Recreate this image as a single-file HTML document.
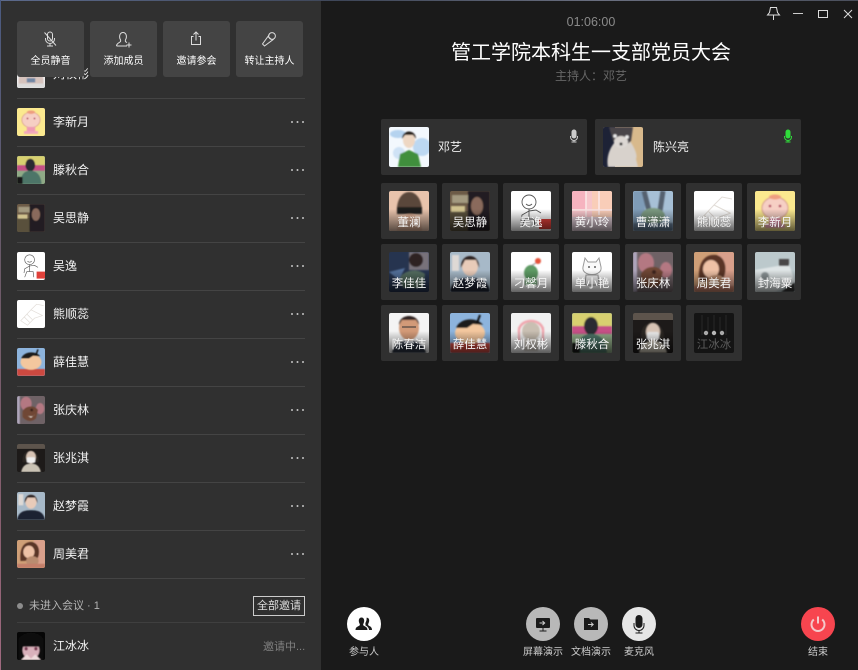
<!DOCTYPE html>
<html lang="zh"><head><meta charset="utf-8"><title>会议</title>
<style>
*{box-sizing:border-box;margin:0;padding:0}
html,body{width:858px;height:670px;overflow:hidden;background:#1a1a1a}
body{position:relative;font-family:"Liberation Sans","Noto Sans CJK SC",sans-serif;font-size:12px;color:#fff}
.abs,.hd,.av,.nm,.dots,.sep,.c,.cav,.tb,.lab,.circ{position:absolute}
#left{position:absolute;left:1px;top:1px;width:320px;height:669px;background:#303030}
.hd{top:21px;width:67px;height:56px;background:#444;border-radius:3px;text-align:center;font-size:10px;line-height:16px;color:#fff}
.hd svg{position:absolute;left:23px;top:8px}
.hd span{position:absolute;left:0;right:0;top:33px}
.av{left:17px;width:28px;height:28px;border-radius:2px;overflow:hidden}
.av svg,.cav svg{display:block;width:100%;height:100%}
.nm{left:53px;line-height:18px;color:#f2f2f2;white-space:nowrap}
.dots{left:291px;width:13px;height:2px;background:radial-gradient(circle at 1px 1px,#bbb .9px,transparent 1.1px) 0 0/5.5px 2px repeat-x}
.sep{left:17px;width:288px;height:1px;background:#444}
.c{width:56px;height:56px;background:#303030;border-radius:2px}
.c.l{width:206px}
.cav{left:8px;top:8px;width:40px;height:40px;border-radius:2px;overflow:hidden}
.tb{left:8px;top:8px;width:40px;height:40px;border-radius:2px;background:linear-gradient(to bottom,rgba(0,0,0,0) 45%,rgba(0,0,0,.62) 100%);color:#f5f5f5;text-align:center;font-size:11.5px;line-height:18px;padding-top:23px;white-space:nowrap;overflow:hidden}
.circ{top:607px;width:34px;height:34px;border-radius:50%}
.circ svg{position:absolute;left:0;top:0}
.lab{top:645px;width:60px;text-align:center;font-size:10px;line-height:15px;color:#ccc;white-space:nowrap}
</style></head><body>
<svg width="0" height="0" style="position:absolute">
<defs>
<filter id="b"><feGaussianBlur stdDeviation=".9"/></filter>
<symbol id="dy" viewBox="0 0 40 40"><rect width="40" height="40" fill="#f3f8fd"/><g filter="url(#b)"><ellipse cx="9" cy="7" rx="8" ry="4" fill="#b5d3ef"/><ellipse cx="33" cy="20" rx="9" ry="9" fill="#bcd8f2"/><ellipse cx="10" cy="26" rx="6" ry="6" fill="#cfe2f5"/><path d="M9 40l2-13 9-4 9 4 3 13z" fill="#3f8f3d"/><ellipse cx="20" cy="13" rx="6" ry="8" fill="#eed7c3"/><path d="M13 12c0-10 14-10 14 0l-3-4h-8z" fill="#201a18"/></g></symbol>
<symbol id="xl" viewBox="0 0 40 40"><rect width="40" height="40" fill="#d8b98c"/><rect width="12" height="40" fill="#1d2236"/><g filter="url(#b)"><path d="M5 40c-2-10 2-20 8-26l14 0c4 6 8 14 6 18l2 8z" fill="#d8d2cc"/><path d="M6 0h24l-2 14c-4 5-14 5-18 0z" fill="#4a4448"/><ellipse cx="18" cy="15" rx="7" ry="6" fill="#dcd7d3"/><circle cx="12" cy="9" r="1.800" fill="#eee"/><circle cx="24" cy="10" r="1.800" fill="#eee"/><circle cx="18" cy="17" r="1.500" fill="#222"/></g></symbol>
<symbol id="dl" viewBox="0 0 40 40"><rect width="40" height="40" fill="#e8c3ac"/><g filter="url(#b)"><path d="M8 22c-2-28 26-28 25 0z" fill="#5a463b"/><rect x="8" y="16" width="25" height="7" fill="#1d1b1c"/><path d="M8 40c0-12 8-17 13-17s12 5 12 17z" fill="#dcaf95"/></g></symbol>
<symbol id="ws" viewBox="0 0 40 40"><rect width="40" height="40" fill="#6c5b47"/><rect x="0" y="20" width="20" height="20" fill="#59503c"/><g filter="url(#b)"><rect x="2" y="4" width="17" height="8" fill="#a39a80"/><rect x="1" y="15" width="14" height="6" fill="#d0c28f"/><path d="M18 40V0h22v40z" fill="#211d21"/><ellipse cx="27" cy="15" rx="6" ry="9" fill="#8a6a5b"/></g></symbol>
<symbol id="wy" viewBox="0 0 40 40"><rect width="40" height="40" fill="#fff"/><g fill="none" stroke="#555" stroke-width=".9"><circle cx="18" cy="11" r="7"/><path d="M15 13c2 2 4 2 6 0M18 18v10M18 20l-7 4-1 6M18 20l7-1 5 3M14 28h9l1 8M14 28l-3 8"/></g><rect x="28" y="28" width="12" height="10" fill="#e0413a"/></symbol>
<symbol id="hx" viewBox="0 0 40 40"><rect width="40" height="40" fill="#f7c6cb"/><rect x="20" width="20" height="40" fill="#f9cdb8"/><rect x="0" width="14" height="18" fill="#f6b3bf"/><path d="M0 19h40M14 0v40M27 0v24" stroke="#fbe6e6" stroke-width="1.6"/><rect y="26" width="40" height="14" fill="#e2cfd8"/></symbol>
<symbol id="cx" viewBox="0 0 40 40"><rect width="40" height="40" fill="#a7c0d6"/><g filter="url(#b)"><rect x="0" width="12" height="40" fill="#7f9cb7"/><path d="M11 0l5 20M30 0l-3 20" stroke="#55606e" stroke-width="5"/><ellipse cx="20" cy="25" rx="12" ry="8" fill="#7c9a81"/><path d="M0 40h40v-8H0z" fill="#62788f"/></g></symbol>
<symbol id="xr" viewBox="0 0 40 40"><rect width="40" height="40" fill="#fff"/><g fill="none" stroke="#e2ddd8" stroke-width="1"><path d="M5 30L20 14l8-8 10 2M20 14l16 8M6 30l9 6 10-10 12-4M10 24l8 8M14 20l8 8"/></g></symbol>
<symbol id="lx" viewBox="0 0 40 40"><rect width="40" height="40" fill="#fbe98f"/><g filter="url(#b)"><ellipse cx="20" cy="17" rx="13" ry="11" fill="#f6cfc4" stroke="#d59a8d"/><rect x="14" y="27" width="12" height="9" fill="#ef9ab4"/><rect x="10" y="33" width="20" height="4" fill="#f2a7bc"/><circle cx="15" cy="15" r="1.3" fill="#a35"/><circle cx="25" cy="15" r="1.3" fill="#a35"/><ellipse cx="20" cy="6" rx="6" ry="2.5" fill="#ee9d7f"/></g></symbol>
<symbol id="lj" viewBox="0 0 40 40"><rect width="40" height="40" fill="#26344f"/><g filter="url(#b)"><rect x="20" width="20" height="18" fill="#78727a"/><ellipse cx="27" cy="8" rx="7" ry="7" fill="#2d2122"/><path d="M10 26c6-8 18-10 26-4l-2 14H14z" fill="#536c5f"/><path d="M0 20l16-4-6 12z" fill="#53709a"/></g></symbol>
<symbol id="zm" viewBox="0 0 40 40"><rect width="40" height="40" fill="#a7b9c8"/><g filter="url(#b)"><path d="M0 40c2-12 10-14 20-14s18 2 20 14z" fill="#1d2231"/><ellipse cx="20" cy="14" rx="8" ry="10" fill="#e8cbb9"/><path d="M11 16C10 0 30 0 29 16l-3-8H15z" fill="#2b2023"/><rect x="2" y="3" width="7" height="16" fill="#ded9d5"/></g></symbol>
<symbol id="dm" viewBox="0 0 40 40"><rect width="40" height="40" fill="#fff"/><g filter="url(#b)"><ellipse cx="20" cy="21" rx="7" ry="8" fill="#5d9a64"/><path d="M20 14l8-5" stroke="#888"/><circle cx="27" cy="9" r="3" fill="#e5533b"/><rect x="14" y="28" width="12" height="5" fill="#5d9a64"/></g></symbol>
<symbol id="dx" viewBox="0 0 40 40"><rect width="40" height="40" fill="#fff"/><g fill="#fafafa" stroke="#9a9a9a"><path d="M13 6l3 4h8l3-4 2 9c2 10-20 10-18 0z"/><path d="M14 23h12l1 10H13zM27 30l6-4"/></g><circle cx="17" cy="15" r=".9" fill="#333"/><circle cx="23" cy="15" r=".9" fill="#333"/></symbol>
<symbol id="zq" viewBox="0 0 40 40"><rect width="40" height="40" fill="#6f6266"/><g filter="url(#b)"><rect width="4" height="40" fill="#aea6bb"/><ellipse cx="13" cy="11" rx="8" ry="10" fill="#b47882"/><ellipse cx="33" cy="18" rx="6" ry="8" fill="#b47882"/><path d="M8 22c4-8 16-10 22-2l-3 12c-6 6-14 4-19-2z" fill="#6f4634"/><path d="M13 27c4 3 10 3 13-1l-6 5z" fill="#e7dcd0"/><circle cx="21" cy="20" r="2" fill="#3a241e"/></g></symbol>
<symbol id="zj" viewBox="0 0 40 40"><rect width="40" height="40" fill="#cf9f77"/><g filter="url(#b)"><rect x="24" width="16" height="40" fill="#d9a08c"/><path d="M5 30C3 6 14 2 22 3s12 12 8 22l-3 4z" fill="#5a3528"/><ellipse cx="17" cy="17" rx="8" ry="9" fill="#eec1a6"/><ellipse cx="22" cy="30" rx="9" ry="7" fill="#b98c6f"/><path d="M0 40h40v-6H0z" fill="#c37f6b"/></g></symbol>
<symbol id="fh" viewBox="0 0 40 40"><rect width="40" height="40" fill="#bcc9cc"/><g filter="url(#b)"><path d="M0 18l34-6 6 18-20 10H0z" fill="#dfe5e6"/><path d="M24 7h10v7H24z" fill="#4a4646"/><circle cx="10" cy="24" r="4" fill="#8b9496"/><path d="M26 40l14-10v10z" fill="#333"/></g></symbol>
<symbol id="cc" viewBox="0 0 40 40"><rect width="40" height="40" fill="#f4f4f4"/><g filter="url(#b)"><ellipse cx="20" cy="15" rx="10" ry="12" fill="#d29a78"/><path d="M10 12C10 0 30 0 30 12l-3-5H13z" fill="#2e2320"/><path d="M3 40c2-10 10-12 17-12s15 2 17 12z" fill="#2c3340"/></g><path d="M13 14h14" stroke="#333"/></symbol>
<symbol id="xj" viewBox="0 0 40 40"><rect width="40" height="40" fill="#8db4dd"/><g filter="url(#b)"><rect y="30" width="40" height="10" fill="#cc4a40"/><ellipse cx="20" cy="20" rx="15" ry="11" fill="#f3c79e"/><path d="M6 15C10 4 28 4 33 12l-10-1-6 4z" fill="#1b1b1b"/><path d="M30 2l-3 8" stroke="#111" stroke-width="2"/></g></symbol>
<symbol id="lq" viewBox="0 0 40 40"><rect width="40" height="40" fill="#f1f1f1"/><g filter="url(#b)"><path d="M8 20C6 4 34 4 32 20" fill="none" stroke="#f0a6ae" stroke-width="2.5"/><path d="M8 14v14M32 14v14" stroke="#f0a6ae" stroke-width="2"/><ellipse cx="20" cy="18" rx="9" ry="9" fill="#c9bfb2"/><rect x="13" y="26" width="14" height="12" fill="#c9c4bc"/></g></symbol>
<symbol id="tq" viewBox="0 0 40 40"><rect width="40" height="40" fill="#8faa86"/><g filter="url(#b)"><rect width="40" height="13" fill="#d8d06f"/><rect y="13" width="40" height="8" fill="#c64f86"/><ellipse cx="19" cy="13" rx="7" ry="9" fill="#2a2a30"/><path d="M5 40c0-14 6-19 14-19s15 5 16 19z" fill="#4e7468"/><rect y="30" width="8" height="10" fill="#141518"/></g></symbol>
<symbol id="zz" viewBox="0 0 40 40"><rect width="40" height="40" fill="#1d1a19"/><rect width="40" height="7" fill="#5d544c"/><g filter="url(#b)"><path d="M8 26C6 4 32 4 31 26z" fill="#2b2523"/><ellipse cx="20" cy="19" rx="7" ry="9" fill="#d7c3b4"/><rect x="14" y="19" width="12" height="8" rx="2" fill="#eee"/><path d="M6 40c2-10 8-12 14-12s12 2 14 12z" fill="#c9c2b4"/></g></symbol>
<symbol id="jb" viewBox="0 0 40 40"><rect width="40" height="40" fill="#060606"/><g filter="url(#b)"><path d="M2 40V10C10-2 30-2 38 10v30z" fill="#111"/><ellipse cx="20" cy="26" rx="12" ry="13" fill="#d9b1bb"/><rect x="5" y="12" width="30" height="9" fill="#0a0a0a"/><circle cx="13" cy="24" r="2.4" fill="#7a3a52"/><circle cx="27" cy="24" r="2.4" fill="#7a3a52"/><path d="M6 40l8-8 6 6 6-6 8 8z" fill="#efdbdc"/></g></symbol>
<symbol id="jg" viewBox="0 0 40 40"><rect width="40" height="40" fill="#141414"/><g stroke="#252525" stroke-width="1.2"><path d="M8 2v20M14 4v16M20 2v16M26 4v16M32 2v20"/></g><circle cx="12" cy="20" r="2.2" fill="#a9a9a9"/><circle cx="20" cy="20" r="2.2" fill="#b8b8b8"/><circle cx="28" cy="20" r="2.2" fill="#a9a9a9"/></symbol>
<symbol id="ll" viewBox="0 0 40 40"><rect width="40" height="40" fill="#eee"/><g filter="url(#b)"><path d="M2 34C2 14 12 6 20 6s18 8 18 28z" fill="#d6c3bd"/><path d="M0 40h40v-6H0z" fill="#dcdcdc"/><rect x="14" y="26" width="12" height="6" fill="#6f86a4"/></g></symbol>
</defs></svg>

<div class="abs" style="left:0;top:0;width:858px;height:1px;background:linear-gradient(90deg,#5c6a8c,#3e4658 40%,#6a6f80 70%,#4a4f5c)"></div>
<div class="abs" style="left:0;top:0;width:1px;height:670px;background:linear-gradient(180deg,#4a5a80,#6b5a68 40%,#8a5f70 80%,#a06a80)"></div>

<div id="left"></div>

<div class="av" style="top:60px"><svg><use href="#ll"/></svg></div><div class="nm" style="top:65px">刘权彬</div>
<div class="sep" style="top:98px"></div>
<div class="av" style="top:108px"><svg><use href="#lx"/></svg></div><div class="nm" style="top:113px">李新月</div><div class="dots" style="top:121px"></div>
<div class="sep" style="top:146px"></div>
<div class="av" style="top:156px"><svg><use href="#tq"/></svg></div><div class="nm" style="top:161px">滕秋合</div><div class="dots" style="top:169px"></div>
<div class="sep" style="top:194px"></div>
<div class="av" style="top:204px"><svg><use href="#ws"/></svg></div><div class="nm" style="top:209px">吴思静</div><div class="dots" style="top:217px"></div>
<div class="sep" style="top:242px"></div>
<div class="av" style="top:252px"><svg><use href="#wy"/></svg></div><div class="nm" style="top:257px">吴逸</div><div class="dots" style="top:265px"></div>
<div class="sep" style="top:290px"></div>
<div class="av" style="top:300px"><svg><use href="#xr"/></svg></div><div class="nm" style="top:305px">熊顺蕊</div><div class="dots" style="top:313px"></div>
<div class="sep" style="top:338px"></div>
<div class="av" style="top:348px"><svg><use href="#xj"/></svg></div><div class="nm" style="top:353px">薛佳慧</div><div class="dots" style="top:361px"></div>
<div class="sep" style="top:386px"></div>
<div class="av" style="top:396px"><svg><use href="#zq"/></svg></div><div class="nm" style="top:401px">张庆林</div><div class="dots" style="top:409px"></div>
<div class="sep" style="top:434px"></div>
<div class="av" style="top:444px"><svg><use href="#zz"/></svg></div><div class="nm" style="top:449px">张兆淇</div><div class="dots" style="top:457px"></div>
<div class="sep" style="top:482px"></div>
<div class="av" style="top:492px"><svg><use href="#zm"/></svg></div><div class="nm" style="top:497px">赵梦霞</div><div class="dots" style="top:505px"></div>
<div class="sep" style="top:530px"></div>
<div class="av" style="top:540px"><svg><use href="#zj"/></svg></div><div class="nm" style="top:545px">周美君</div><div class="dots" style="top:553px"></div>
<div class="sep" style="top:578px"></div>

<div class="abs" style="left:17px;top:603px;width:6px;height:6px;border-radius:50%;background:#8c8c8c"></div>
<div class="abs" style="left:29px;top:597px;line-height:18px;font-size:11px;color:#b5b5b5">未进入会议 · 1</div>
<div class="abs" style="left:253px;top:596px;width:52px;height:20px;border:1px solid #ccc;text-align:center;line-height:18px;font-size:11px;color:#ddd;white-space:nowrap">全部邀请</div>
<div class="sep" style="top:622px;background:#3f3f3f"></div>
<div class="av" style="top:632px"><svg><use href="#jb"/></svg></div><div class="nm" style="top:637px">江冰冰</div>
<div class="abs" style="left:263px;top:638px;line-height:18px;color:#808080;font-size:11px;white-space:nowrap">邀请中...</div>

<div class="hd" style="left:17px"><svg width="20" height="20" viewBox="0 0 20 20" fill="none" stroke="#ddd" stroke-width="1"><rect x="7.5" y="3" width="5" height="9" rx="2.5"/><path d="M5.500 9v1a4.500 4.500 0 0 0 9 0V9M10 14.500V17M7 17h6M4.500 3.500l11.500 13"/></svg><span>全员静音</span></div>
<div class="hd" style="left:90px"><svg width="20" height="20" viewBox="0 0 20 20" fill="none" stroke="#ddd" stroke-width="1"><path d="M3.500 17c0-2.200 1.800-3 3.500-4 1-.6 1-1.500 0-3.200C6 7 7 3.500 10 3.500s4 3.500 3 6.300c-1 1.700-1 2.600 0 3.200l1 .5M3.500 17h10.500M16 13.500v5M13.500 16h5"/></svg><span>添加成员</span></div>
<div class="hd" style="left:163px"><svg width="20" height="20" viewBox="0 0 20 20" fill="none" stroke="#ddd" stroke-width="1"><path d="M7.500 7.500H5.500v8h9v-8h-2M10 11.500V3M7.500 5.500L10 3l2.500 2.500"/></svg><span>邀请参会</span></div>
<div class="hd" style="left:236px"><svg width="20" height="20" viewBox="0 0 20 20" fill="none" stroke="#ddd" stroke-width="1"><circle cx="13" cy="7" r="3.400"/><path d="M10.400 5.500L3.500 15l2 2L14.500 10.300M9 7.500l3.500 3"/></svg><span>转让主持人</span></div>

<div class="abs" style="left:491px;width:200px;top:14px;text-align:center;line-height:16px;font-size:12.5px;color:#8a8a8a">01:06:00</div>
<div class="abs" style="left:391px;width:400px;top:38px;text-align:center;line-height:30px;font-size:20px;color:#fff;white-space:nowrap">管工学院本科生一支部党员大会</div>
<div class="abs" style="left:491px;width:200px;top:68px;text-align:center;line-height:17px;color:#666">主持人：邓艺</div>

<svg class="abs" style="left:765px;top:5px" width="90" height="16" viewBox="0 0 90 16" fill="none" stroke="#ddd" stroke-width="1"><path d="M5.500 2.500h6l1 5 2 2.500H2.500l2-2.500zM8.500 10v5"/><path d="M28 8.500h10" stroke="#ccc"/><rect x="53.500" y="5.500" width="9" height="7"/><path d="M79 5l8 8M87 5l-8 8"/></svg>

<div class="c l" style="left:381px;top:119px"><div class="cav" style="left:8px"><svg><use href="#dy"/></svg></div><div class="abs" style="left:57px;top:19px;line-height:18px;color:#eee">邓艺</div><svg class="abs" style="left:187px;top:10px" width="12" height="14" viewBox="0 0 12 14" fill="none" stroke="#ccc"><rect x="4" y="1" width="4" height="8" rx="2" fill="#ccc"/><path d="M2.500 7v1a3.500 3.500 0 0 0 7 0V7M6 11.500V13M3.500 13h5"/></svg></div>
<div class="c l" style="left:595px;top:119px"><div class="cav"><svg><use href="#xl"/></svg></div><div class="abs" style="left:58px;top:19px;line-height:18px;color:#eee">陈兴亮</div><svg class="abs" style="left:187px;top:10px" width="12" height="14" viewBox="0 0 12 14" fill="none" stroke="#2fdc3a"><rect x="4" y="1" width="4" height="8" rx="2" fill="#2fdc3a"/><path d="M2.500 7v1a3.500 3.500 0 0 0 7 0V7M6 11.500V13M3.500 13h5"/></svg></div>

<div class="c" style="left:381px;top:183px"><div class="cav"><svg><use href="#dl"/></svg></div><div class="tb">董澜</div></div>
<div class="c" style="left:442px;top:183px"><div class="cav"><svg><use href="#ws"/></svg></div><div class="tb">吴思静</div></div>
<div class="c" style="left:503px;top:183px"><div class="cav"><svg><use href="#wy"/></svg></div><div class="tb">吴逸</div></div>
<div class="c" style="left:564px;top:183px"><div class="cav"><svg><use href="#hx"/></svg></div><div class="tb">黄小玲</div></div>
<div class="c" style="left:625px;top:183px"><div class="cav"><svg><use href="#cx"/></svg></div><div class="tb">曹潇潇</div></div>
<div class="c" style="left:686px;top:183px"><div class="cav"><svg><use href="#xr"/></svg></div><div class="tb">熊顺蕊</div></div>
<div class="c" style="left:747px;top:183px;width:54px"><div class="cav"><svg><use href="#lx"/></svg></div><div class="tb">李新月</div></div>

<div class="c" style="left:381px;top:244px"><div class="cav"><svg><use href="#lj"/></svg></div><div class="tb">李佳佳</div></div>
<div class="c" style="left:442px;top:244px"><div class="cav"><svg><use href="#zm"/></svg></div><div class="tb">赵梦霞</div></div>
<div class="c" style="left:503px;top:244px"><div class="cav"><svg><use href="#dm"/></svg></div><div class="tb">刁馨月</div></div>
<div class="c" style="left:564px;top:244px"><div class="cav"><svg><use href="#dx"/></svg></div><div class="tb">单小艳</div></div>
<div class="c" style="left:625px;top:244px"><div class="cav"><svg><use href="#zq"/></svg></div><div class="tb">张庆林</div></div>
<div class="c" style="left:686px;top:244px"><div class="cav"><svg><use href="#zj"/></svg></div><div class="tb">周美君</div></div>
<div class="c" style="left:747px;top:244px;width:54px"><div class="cav"><svg><use href="#fh"/></svg></div><div class="tb">封海粟</div></div>

<div class="c" style="left:381px;top:305px"><div class="cav"><svg><use href="#cc"/></svg></div><div class="tb">陈春洁</div></div>
<div class="c" style="left:442px;top:305px"><div class="cav"><svg><use href="#xj"/></svg></div><div class="tb">薛佳慧</div></div>
<div class="c" style="left:503px;top:305px"><div class="cav"><svg><use href="#lq"/></svg></div><div class="tb">刘权彬</div></div>
<div class="c" style="left:564px;top:305px"><div class="cav"><svg><use href="#tq"/></svg></div><div class="tb">滕秋合</div></div>
<div class="c" style="left:625px;top:305px"><div class="cav"><svg><use href="#zz"/></svg></div><div class="tb">张兆淇</div></div>
<div class="c" style="left:686px;top:305px"><div class="cav"><svg><use href="#jg"/></svg></div><div class="tb" style="color:#5c5c5c;background:none">江冰冰</div></div>

<div class="circ" style="left:347px;background:#fff"><svg width="34" height="34" viewBox="0 0 34 34" fill="#1a1a1a"><path d="M8.500 23c0-3 2.500-3.500 4-4.500.5-.5.5-1 0-2-1.500-3-.5-6 2-6s3.500 3 2 6c-.5 1-.5 1.500 0 2 1.500 1 4 1.500 4 4.500z"/><path d="M19.500 10.800c2.500-.5 3.500 2.500 2 5.500-.5 1-.5 1.700 0 2.200 1.200.8 3.500 1.200 3.500 4.500h-3c0-2.500-2-3.800-3.700-4.800.3-.7.3-1.200 0-2 1.400-2.500 1.500-4.300 1.200-5.400z"/></svg></div>
<div class="lab" style="left:334px">参与人</div>
<div class="circ" style="left:526px;background:#b8b8b8"><svg width="34" height="34" viewBox="0 0 34 34"><rect x="10" y="11" width="14" height="10" rx="1" fill="#1a1a1a"/><path d="M13.500 24h7M17 21v3" stroke="#1a1a1a"/><path d="M13.500 16h5M16.500 14l2.200 2-2.200 2" stroke="#ccc" fill="none"/></svg></div>
<div class="lab" style="left:513px">屏幕演示</div>
<div class="circ" style="left:574px;background:#b8b8b8"><svg width="34" height="34" viewBox="0 0 34 34"><path d="M10 11h5l1.500 1.500H24v10.500H10z" fill="#1a1a1a"/><path d="M14 17.500h5M17 15.500l2.200 2-2.200 2" stroke="#ccc" fill="none"/></svg></div>
<div class="lab" style="left:561px">文档演示</div>
<div class="circ" style="left:622px;background:#e6e6e6"><svg width="34" height="34" viewBox="0 0 34 34" fill="none" stroke="#1a1a1a"><rect x="14" y="8.500" width="6" height="12" rx="3" fill="#1a1a1a"/><path d="M12 16v2.500a5 5 0 0 0 10 0V16M17 23.500V26M13.500 26h7"/></svg></div>
<div class="lab" style="left:609px">麦克风</div>
<div class="circ" style="left:801px;background:#f7454f"><svg width="34" height="34" viewBox="0 0 34 34" fill="none" stroke="#f4c9cb" stroke-width="2"><path d="M12.800 12.500a6.500 6.500 0 1 0 8.400 0M17 9.500v7"/></svg></div>
<div class="lab" style="left:788px">结束</div>
</body></html>
